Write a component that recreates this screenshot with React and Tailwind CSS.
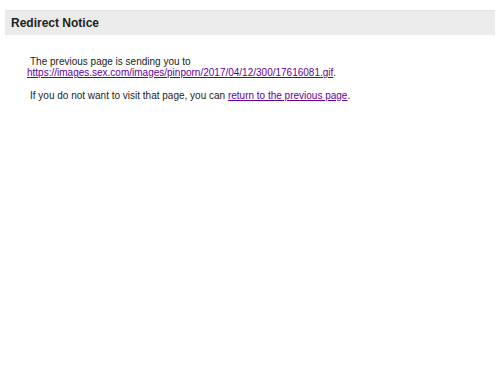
export default function App() {
  return (
    <div className="min-h-[375px] bg-white font-['Liberation_Sans',Arial,sans-serif] text-[#222]">
      <div className="pt-[10px] px-[5px]">
        <div className="bg-[#ebebeb] border-t border-[#e4e4e4] h-[25px] flex items-center px-[6px]">
          <h1 className="text-[12px] font-bold text-[#222]">Redirect Notice</h1>
        </div>
      </div>
      <div className="pl-[27px] pt-[21px] text-[10px] leading-[11px]">
        <div className="pl-[3px]">The previous page is sending you to</div>
        <div>
          <a href="#" className="text-[#660099] underline">
            https://images.sex.com/images/pinporn/2017/04/12/300/17616081.gif
          </a>
          .
        </div>
        <div className="pl-[3px] mt-[12px]">
          If you do not want to visit that page, you can{" "}
          <a href="#" className="text-[#660099] underline">
            return to the previous page
          </a>
          .
        </div>
      </div>
    </div>
  );
}
